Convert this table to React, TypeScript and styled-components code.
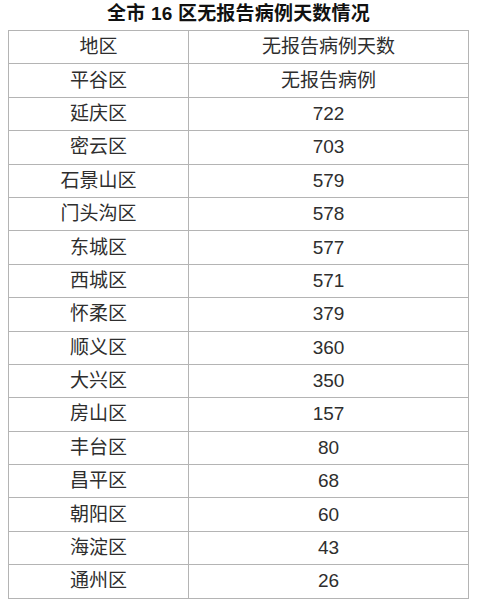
import React from 'react';
import styled, { createGlobalStyle } from 'styled-components';

const GlobalStyle = createGlobalStyle`
  html, body {
    margin: 0;
    padding: 0;
    background: #ffffff;
  }
  body {
    font-family: "Liberation Sans", "Noto Sans CJK SC", sans-serif;
    color: #333333;
  }
`;

const Page = styled.div`
  width: 481px;
  height: 600px;
  padding: 3px 0 0 8px;
  box-sizing: border-box;
  overflow: hidden;
`;

const Title = styled.h1`
  margin: 0;
  width: 461px;
  height: 27px;
  text-align: center;
  font-size: 19px;
  line-height: 22px;
  font-weight: 700;
  color: #111111;
  letter-spacing: 0.2px;
`;

const Table = styled.table`
  width: 461px;
  border-collapse: collapse;
  table-layout: fixed;
  border: 1.5px solid #b4b4b4;
`;

const Cell = styled.td<{ $head?: boolean }>`
  height: 32.4px;
  padding: 0;
  border: 1.5px solid #b4b4b4;
  text-align: center;
  vertical-align: middle;
  font-size: 19px;
  line-height: 22px;
  font-weight: 400;
  color: #2e2e2e;
`;

const rows: [string, string][] = [
  ['平谷区', '无报告病例'],
  ['延庆区', '722'],
  ['密云区', '703'],
  ['石景山区', '579'],
  ['门头沟区', '578'],
  ['东城区', '577'],
  ['西城区', '571'],
  ['怀柔区', '379'],
  ['顺义区', '360'],
  ['大兴区', '350'],
  ['房山区', '157'],
  ['丰台区', '80'],
  ['昌平区', '68'],
  ['朝阳区', '60'],
  ['海淀区', '43'],
  ['通州区', '26'],
];

const App: React.FC = () => (
  <>
    <GlobalStyle />
    <Page>
      <Title>全市 16 区无报告病例天数情况</Title>
      <Table>
        <colgroup>
          <col style={{ width: 180 }} />
          <col />
        </colgroup>
        <tbody>
          <tr>
            <Cell $head>地区</Cell>
            <Cell $head>无报告病例天数</Cell>
          </tr>
          {rows.map(([area, days]) => (
            <tr key={area}>
              <Cell>{area}</Cell>
              <Cell>{days}</Cell>
            </tr>
          ))}
        </tbody>
      </Table>
    </Page>
  </>
);

export default App;
